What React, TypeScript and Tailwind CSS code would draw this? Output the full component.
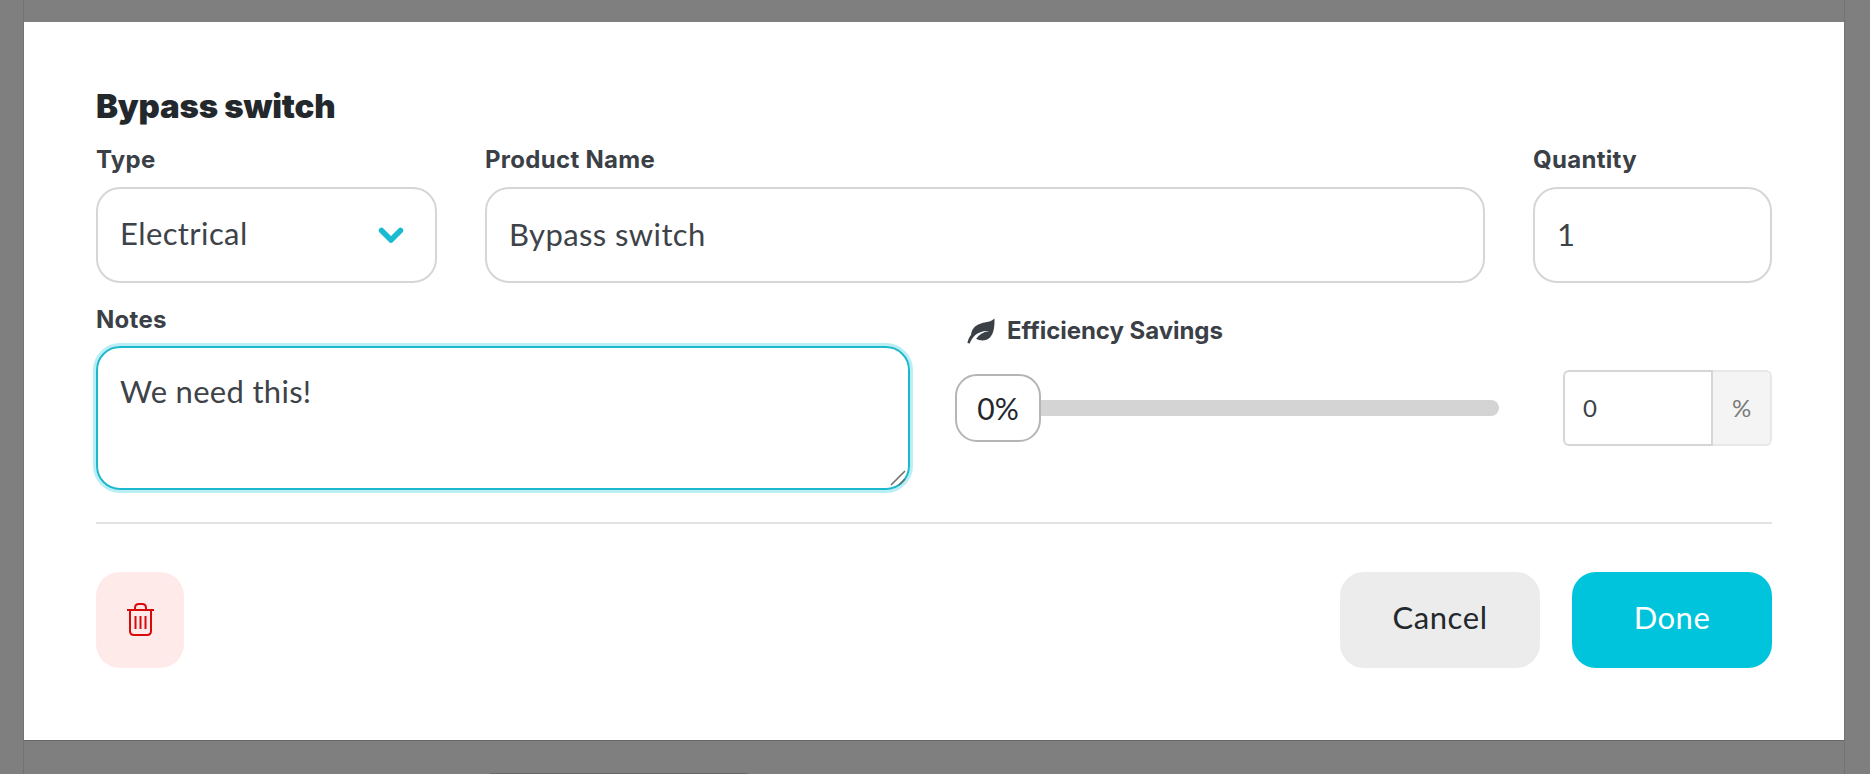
import React from "react";

const font = "font-['Lato','Liberation_Sans',sans-serif]";
const labelFont = "font-['Inter','Liberation_Sans',sans-serif]";
const field = "mt-[14px] block w-full h-[96px] rounded-[24px] border-2 border-[#d6d6d6] px-[22px] pb-[2px] text-[31px] tracking-[0.4px] text-[#3d4349] outline-none";

function Label({ children }: any) {
    return <label className={"block h-[26px] text-[24px] leading-[26px] font-bold text-[#3a4046] tracking-[0.3px] " + labelFont}>{children}</label>;
}

function Leaf() {
    return (
        <svg viewBox="0 0 26 24" className="w-[28px] h-[26px] shrink-0" fill="#3a4046">
            <path d="M25.5 0.5C25.8 8 25 14 21.5 17.8C18 21.4 12.5 21.5 8.5 19.2C11 15.5 15 13 20.5 12C14.5 11.8 9.5 13.5 6 17.5C4.5 19.3 3.2 21.5 2.6 23.6L0.4 23.2C0.9 20.4 2.2 17.6 3.8 15.5C4.2 10.5 7.5 6.5 13 5C18 3.7 22.5 3.6 25.5 0.5Z" />
        </svg>
    );
}

function Trash() {
    return (
        <svg viewBox="0 0 27 33" className="w-[27px] h-[33px] mb-[2px]" fill="none" stroke="#d90a0a" strokeWidth="2">
            <path d="M0 7H27" />
            <path d="M8 6.5V5C8 2.5 9.5 1 12 1H15C17.5 1 19 2.5 19 5V6.5" />
            <path d="M3 7V28C3 30.5 4.5 32 7 32H20C22.5 32 24 30.5 24 28V7" />
            <path d="M8.5 13V26M13.5 13V26M18.5 13V26" />
        </svg>
    );
}

export default function App() {
    return (
        <div className={"h-[774px] w-[1870px] overflow-hidden bg-[#7f7f7f] pl-[23px] " + font}>
            <div className="w-[1822px] h-full border-x border-[#737373] pt-[22px]">
                <div className="w-[1820px] h-[719px] bg-white border-b border-[#666666] px-[72px] pt-[66px]">
                    <h2 className={"h-[36px] text-[33px] leading-[36px] font-black text-[#23282d] tracking-[-0.2px] " + labelFont}>Bypass switch</h2>

                    <div className="mt-[23px] flex">
                        <div className="w-[341px]">
                            <Label>Type</Label>
                            <div className="mt-[14px] h-[96px] flex items-center justify-between rounded-[24px] border-2 border-[#d6d6d6] pl-[22px] pr-[31px] text-[31px] tracking-[0.4px] text-[#3d4349]">
                                <span className="pb-[4px]">Electrical</span>
                                <svg viewBox="0 0 26 17" className="w-[26px] h-[17px]" fill="none" stroke="#19bbd0" strokeWidth="5.5" strokeLinecap="round" strokeLinejoin="round">
                                    <path d="M3.5 3.5L13 13L22.5 3.5" />
                                </svg>
                            </div>
                        </div>
                        <div className="ml-[48px] w-[1000px]">
                            <Label>Product Name</Label>
                            <input readOnly value="Bypass switch" className={field} />
                        </div>
                        <div className="ml-[48px] w-[239px]">
                            <Label>Quantity</Label>
                            <input readOnly value="1" className={field} />
                        </div>
                    </div>

                    <div className="mt-[24px] flex">
                        <div className="w-[814px]">
                            <Label>Notes</Label>
                            <div className="relative mt-[13px]">
                                <textarea readOnly value="We need this!" className="block w-full h-[144px] rounded-[24px] border-2 border-[#1cb8cc] ring-[3px] ring-[#b9eef5] px-[22px] py-[25px] text-[31px] leading-[36px] tracking-[0.3px] text-[#3d4349] outline-none resize-none" />
                                <svg viewBox="0 0 16 16" className="absolute right-[4px] bottom-[4px] w-[16px] h-[16px]" fill="none" stroke="#6f6f6f" strokeWidth="1.6">
                                    <path d="M1 15L15 1M9 15L15 9" />
                                </svg>
                            </div>
                        </div>
                        <div className="ml-[45px] flex-1">
                            <div className="ml-[12px] mt-[11px] flex items-center gap-[12px] h-[26px]">
                                <Leaf />
                                <span className={"text-[24px] leading-[26px] font-bold text-[#3a4046] tracking-[-0.05px] " + labelFont}>Efficiency Savings</span>
                            </div>
                            <div className="mt-[26px] flex items-center">
                                <div className="flex-1 flex items-center">
                                    <div className="w-[86px] h-[68px] shrink-0 flex items-center justify-center rounded-[22px] border-2 border-[#b5b5b5] bg-white text-[30px] text-[#23282d]">0%</div>
                                    <div className="w-[458px] h-[16px] rounded-r-full bg-[#d4d4d4]" />
                                </div>
                                <div className="flex w-[209px] h-[76px]">
                                    <input readOnly value="0" className="w-[150px] h-full rounded-l-[6px] border-2 border-[#d6d6d6] pl-[18px] pb-[2px] text-[24px] text-[#3d4349] outline-none" />
                                    <div className="flex-1 flex items-center justify-center rounded-r-[6px] border-2 border-l-0 border-[#e8e8e8] bg-[#f4f4f4] text-[24px] text-[#7a7a7a]">%</div>
                                </div>
                            </div>
                        </div>
                    </div>

                    <div className="mt-[32px] h-[2px] bg-[#e3e3e3]" />

                    <div className="mt-[48px] flex items-center justify-between">
                        <button className="w-[88px] h-[96px] flex items-center justify-center rounded-[24px] bg-[#ffeaea]"><Trash /></button>
                        <div className="flex gap-[32px]">
                            <button className="w-[200px] h-[96px] pb-[5px] rounded-[24px] bg-[#ececec] text-[31px] tracking-[0.6px] text-[#23282d]">Cancel</button>
                            <button className="w-[200px] h-[96px] pb-[5px] rounded-[24px] bg-[#00c4dc] text-[31px] tracking-[0.5px] text-white">Done</button>
                        </div>
                    </div>
                </div>
                <div className="mt-[32px] ml-[464px] w-[262px] h-[4px] rounded-t-[6px] bg-[#686868]" />
            </div>
        </div>
    );
}
